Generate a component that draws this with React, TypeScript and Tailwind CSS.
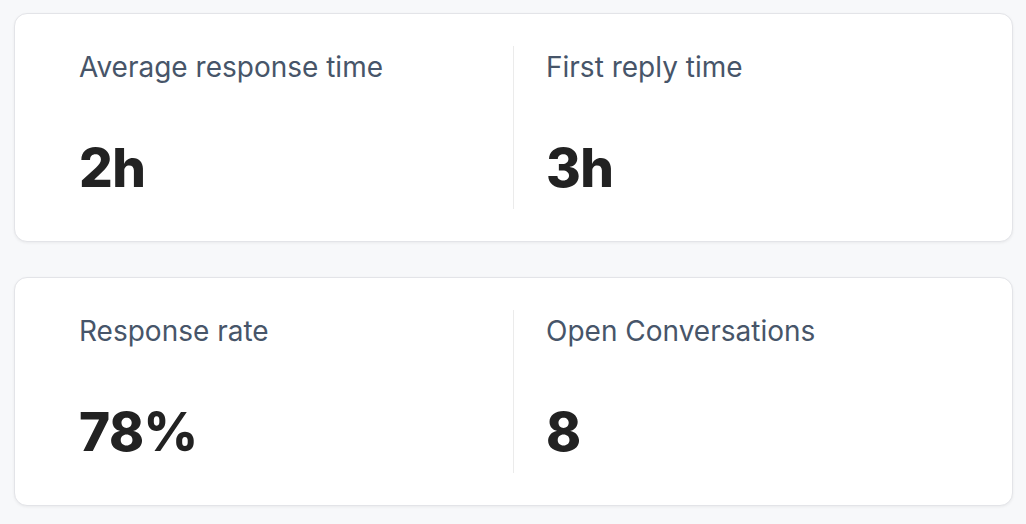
import React from "react";

function Stat({ label, value, divider }: { label: string; value: string; divider?: boolean }) {
  return (
    <div className={"flex-1 h-[163px] px-[32px] pt-[4px] flex flex-col" + (divider ? " border-l border-[#ebebeb]" : "")}>
      <div className="text-[28px] leading-[34px] text-[#475569]">{label}</div>
      <div className="mt-[58px] text-[53px] leading-none font-extrabold text-[#222222] tracking-[-0.5px]">{value}</div>
    </div>
  );
}

function Card({ a, b }: { a: [string, string]; b: [string, string] }) {
  return (
    <div className="bg-white border border-[#e3e4e8] rounded-[13px] shadow-[0_1px_3px_rgba(0,0,0,0.06)] px-[32px] py-[32px] flex">
      <Stat label={a[0]} value={a[1]} />
      <Stat label={b[0]} value={b[1]} divider />
    </div>
  );
}

export default function App() {
  return (
    <div
      className="w-[1026px] h-[524px] bg-[#f7f8fa] pl-[14px] pr-[13px] pt-[13px] flex flex-col gap-[35px]"
      style={{ fontFamily: "Inter, 'Noto Sans', sans-serif" }}
    >
      <Card a={["Average response time", "2h"]} b={["First reply time", "3h"]} />
      <Card a={["Response rate", "78%"]} b={["Open Conversations", "8"]} />
    </div>
  );
}
